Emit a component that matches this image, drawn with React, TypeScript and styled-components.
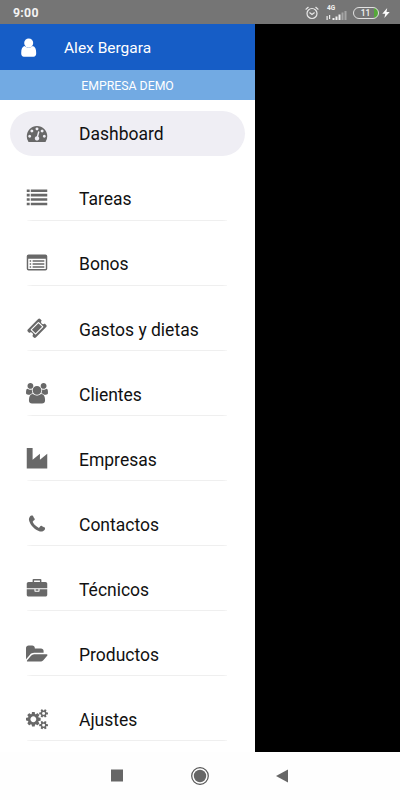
import React from 'react';
import styled, { createGlobalStyle } from 'styled-components';

const GlobalStyle = createGlobalStyle`
  * { box-sizing: border-box; }
  body { margin: 0; background: #000; font-family: Roboto, sans-serif; }
`;

const Screen = styled.div`
  width: 400px;
  height: 800px;
  display: flex;
  flex-direction: column;
  overflow: hidden;
  background: #000;
`;

const StatusBar = styled.header`
  height: 24px;
  flex: none;
  display: flex;
  align-items: center;
  justify-content: space-between;
  padding: 1px 10px 0 13px;
  background: #757575;
  color: #f3f3f3;
`;

const Clock = styled.span`
  font-size: 12.3px;
  font-weight: 700;
  line-height: 16px;
  letter-spacing: 0.3px;
`;

const StatusIcons = styled.div`
  display: flex;
  align-items: center;
`;

const Network = styled.div`
  width: 22px;
  height: 16px;
  margin-left: 7px;
  display: flex;
  flex-direction: column;
`;

const NetworkLabel = styled.span`
  height: 6px;
  padding-left: 1px;
  font-size: 6.5px;
  font-weight: 700;
  line-height: 6px;
`;

const Battery = styled.div`
  width: 26px;
  height: 12px;
  margin: 0 3px 0 5px;
  padding-right: 1px;
  border: 1.5px solid #e2e2e2;
  border-radius: 6px;
  background: linear-gradient(90deg, transparent 84%, #55a83a 84%);
  font-size: 8.5px;
  font-weight: 500;
  line-height: 10px;
  text-align: center;
`;

const Drawer = styled.aside`
  width: 255px;
  height: 727.5px;
  flex: none;
  display: flex;
  flex-direction: column;
  background: #fff;
`;

const Profile = styled.div`
  height: 46px;
  display: flex;
  align-items: center;
  padding: 1px 0 0 20px;
  background: #165dc6;
  color: #fff;
`;

const ProfileName = styled.span`
  margin-left: 26px;
  font-size: 15.5px;
  line-height: 20px;
`;

const Company = styled.div`
  height: 30px;
  background: #72aae3;
  color: #fff;
  font-size: 12.3px;
  line-height: 32px;
  text-align: center;
`;

const Menu = styled.nav`
  display: flex;
  flex-direction: column;
  gap: 20.6px;
  padding: 11px 10.5px 0 10px;
`;

const MenuItem = styled.a<{ $active?: boolean }>`
  height: 44.5px;
  flex: none;
  display: flex;
  align-items: center;
  padding-left: 16px;
  border-radius: 23px;
  background: ${({ $active }) =>
    $active ? '#efeef4' : 'linear-gradient(#efefef, #efefef) 17px 100% / 200px 1px no-repeat'};
  color: #111;
`;

const MenuLabel = styled.span`
  margin-left: 31px;
  padding-top: 2px;
  font-size: 17.5px;
  line-height: 22px;
`;

const IconBox = styled.svg`
  flex: none;
  overflow: visible;
  fill: #686868;
`;

const NavBar = styled.footer`
  flex: 1;
  display: flex;
  align-items: center;
  padding: 0 111px 0 110px;
  justify-content: space-between;
  background: #fefefe;
`;

const smallCog =
  'v140q0 16-149 31-12 27-30 52 51 113 51 138 0 4-4 7-122 71-124 71-8 0-46-47t-52-68q-20 2-30 2t-30-2q-14 21-52 68t-46 47q-2 0-124-71-4-3-4-7 0-25 51-138-18-25-30-52-149-15-149-31v-140q0-16 149-31 13-29 30-52-51-113-51-138 0-4 4-7 4-2 35-20t59-34 30-16q8 0 46 46.5t52 67.5q20-2 30-2t30 2q51-71 92-112l6-2q4 0 124 70 4 3 4 7 0 25-51 138 17 23 30 52 149 15 149 31z';

const icons = {
  dashboard:
    'M384 1152q0-53-37.5-90.5t-90.5-37.5-90.5 37.5-37.5 90.5 37.5 90.5 90.5 37.5 90.5-37.5 37.5-90.5zm192-448q0-53-37.5-90.5t-90.5-37.5-90.5 37.5-37.5 90.5 37.5 90.5 90.5 37.5 90.5-37.5 37.5-90.5zm428 481l101-382q6-26-7.5-48.5t-38.5-29.5-48 6.5-30 39.5l-101 382q-60 5-107 43.5t-63 98.5q-20 77 20 146t117 89 146-20 89-117q16-60-6-117t-72-91zm660-33q0-53-37.5-90.5t-90.5-37.5-90.5 37.5-37.5 90.5 37.5 90.5 90.5 37.5 90.5-37.5 37.5-90.5zm-640-640q0-53-37.5-90.5t-90.5-37.5-90.5 37.5-37.5 90.5 37.5 90.5 90.5 37.5 90.5-37.5 37.5-90.5zm448 192q0-53-37.5-90.5t-90.5-37.5-90.5 37.5-37.5 90.5 37.5 90.5 90.5 37.5 90.5-37.5 37.5-90.5zm320 448q0 261-141 483-19 29-54 29h-1402q-35 0-54-29-141-221-141-483 0-182 71-348t191-286 286-191 348-71 348 71 286 191 191 286 71 348z',
  list:
    'M0 128h256v224h-256zM352 128h1440v224h-1440zM0 512h256v224h-256zM352 512h1440v224h-1440zM0 896h256v224h-256zM352 896h1440v224h-1440zM0 1280h256v224h-256zM352 1280h1440v224h-1440z',
  voucher:
    'M160 128H1632Q1792 128 1792 288V1376Q1792 1536 1632 1536H160Q0 1536 0 1376V288Q0 128 160 128ZM128 512V1376Q128 1408 160 1408H1632Q1664 1408 1664 1376V512ZM256 640h128v128h-128zM512 640h1024v128h-1024zM256 896h128v128h-128zM512 896h1024v128h-1024zM256 1152h128v128h-128zM512 1152h1024v128h-1024z',
  ticket:
    'M1024 452l316 316-572 572-316-316zm-211 979l618-618q19-19 19-45t-19-45l-362-362q-18-18-45-18t-45 18l-618 618q-19 19-19 45t19 45l362 362q18 18 45 18t45-18zm889-637l-907 908q-37 37-90.5 37t-90.5-37l-126-126q56-56 56-136t-56-136-136-56-136 56l-125-126q-37-37-37-90.5t37-90.5l907-906q37-37 90.5-37t90.5 37l125 125q-56 56-56 136t56 136 136 56 136-56l126 125q37 37 37 90.5t-37 90.5z',
  users:
    'M593 896q-162 5-265 128h-134q-82 0-138-40.5t-56-118.5q0-353 124-353 6 0 43.5 21t97.5 42.5 119 21.5q67 0 133-23-5 37-5 66 0 159 81 256zm1071 637q0 120-73 189.5t-194 69.5h-874q-121 0-194-69.5t-73-189.5q0-53 3.5-103.5t14-109 26.5-108.5 43-97.5 62-81 85.5-53.5 111.5-20q10 0 43 21.5t73 48 107 48 135 21.5 135-21.5 107-48 73-48 43-21.5q61 0 111.5 20t85.5 53.5 62 81 43 97.5 26.5 108.5 14 109 3.5 103.5zm-1024-1277q0 106-75 181t-181 75-181-75-75-181 75-181 181-75 181 75 75 181zm704 384q0 159-112.5 271.5t-271.5 112.5-271.5-112.5-112.5-271.5 112.5-271.5 271.5-112.5 271.5 112.5 112.5 271.5zm576 225q0 78-56 118.5t-138 40.5h-134q-103-123-265-128 81-97 81-256 0-29-5-66 66 23 133 23 59 0 119-21.5t97.5-42.5 43.5-21q124 0 124 353zm-128-609q0 106-75 181t-181 75-181-75-75-181 75-181 181-75 181 75 75 181z',
  industry: 'M0 0H512V1024L1152 512V1024L1792 512V1792H0Z',
  phone:
    'M1600 1240q0 27-10 70.5t-21 68.5q-21 50-122 106-94 51-186 51-27 0-53-3.5t-57.5-12.5-47-14.5-55.5-20.5-49-18q-98-35-175-83-127-79-264-216t-216-264q-48-77-83-175-3-9-18-49t-20.5-55.5-14.5-47-12.5-57.5-3.5-53q0-92 51-186 56-101 106-122 25-11 68.5-21t70.5-10q14 0 21 3 18 6 53 76 11 19 30 54t35 63.5 31 53.5q3 4 17.5 25t21.5 35.5 7 28.5q0 20-28.5 50t-62 55-62 53-28.5 46q0 9 5 22.5t8.5 20.5 14 24 11.5 19q76 137 174 235t235 174q2 1 19 11.5t24 14 20.5 8.5 22.5 5q18 0 46-28.5t53-62 55-62 50-28.5q14 0 28.5 7t35.5 21.5 25 17.5q25 15 53.5 31t63.5 35 54 30q70 35 76 53 3 7 3 21z',
  briefcase:
    'M640 256h512v-128h-512v128zm1152 640v480q0 66-47 113t-113 47h-1472q-66 0-113-47t-47-113v-480h672v160q0 26 19 45t45 19h320q26 0 45-19t19-45v-160h672zm-768 0v128h-256v-128h256zm768-480v384h-1792v-384q0-66 47-113t113-47h352v-160q0-40 28-68t68-28h576q40 0 68 28t28 68v160h352q66 0 113 47t47 113z',
  folder:
    'M1879 952q0 31-31 66l-336 396q-43 51-120.5 86.5t-143.5 35.5h-1088q-34 0-60.5-13t-26.5-43q0-31 31-66l336-396q43-51 120.5-86.5t143.5-35.5h1088q34 0 60.5 13t26.5 43zm-343-344v160h-832q-94 0-197 47.5t-164 119.5l-337 396-5 6q0-4-.5-12.5t-.5-12.5v-960q0-92 66-158t158-66h320q92 0 158 66t66 158v32h544q92 0 158 66t66 158z',
  cogs:
    'M896 896q0-106-75-181t-181-75-181 75-75 181 75 181 181 75 181-75 75-181zm768 512q0-52-38-90t-90-38-90 38-38 90q0 53 37.5 90.5t90.5 37.5 90.5-37.5 37.5-90.5zm0-1024q0-52-38-90t-90-38-90 38-38 90q0 53 37.5 90.5t90.5 37.5 90.5-37.5 37.5-90.5zm-384 421v185q0 10-7 19.5t-16 10.5l-155 24q-11 35-32 76 34 48 90 115 7 11 7 20 0 12-7 19-23 30-82.5 89.5t-78.5 59.5q-11 0-21-7l-115-90q-37 19-77 31-11 108-23 155-7 24-30 24h-186q-11 0-20-7.5t-10-17.5l-23-153q-34-10-75-31l-118 89q-7 7-20 7-11 0-21-8-144-133-144-160 0-9 7-19 10-14 41-53t47-61q-23-44-35-82l-152-24q-10-1-17-9.5t-7-19.5v-185q0-10 7-19.5t16-10.5l155-24q11-35 32-76-34-48-90-115-7-11-7-20 0-12 7-20 22-30 82-89t79-59q11 0 21 7l115 90q34-18 77-32 11-108 23-154 7-24 30-24h186q11 0 20 7.5t10 17.5l23 153q34 10 75 31l118-89q8-7 20-7 11 0 21 8 144 133 144 160 0 8-7 19-12 16-42 54t-45 60q23 48 34 82l152 23q10 2 17 10.5t7 19.5z' +
    'M1920 1338' + smallCog + 'M1920 314' + smallCog,
};

type IconName = keyof typeof icons;

const wideIcons: IconName[] = ['users', 'folder', 'cogs'];

const entries: { icon: IconName; label: string }[] = [
  { icon: 'dashboard', label: 'Dashboard' },
  { icon: 'list', label: 'Tareas' },
  { icon: 'voucher', label: 'Bonos' },
  { icon: 'ticket', label: 'Gastos y dietas' },
  { icon: 'users', label: 'Clientes' },
  { icon: 'industry', label: 'Empresas' },
  { icon: 'phone', label: 'Contactos' },
  { icon: 'briefcase', label: 'Técnicos' },
  { icon: 'folder', label: 'Productos' },
  { icon: 'cogs', label: 'Ajustes' },
];

function MenuIcon({ name }: { name: IconName }) {
  const left = wideIcons.includes(name) ? 0 : -64;
  return (
    <IconBox width="22" height="20.5" viewBox={`${left} 0 1920 1792`}>
      <path fillRule="evenodd" d={icons[name]} />
    </IconBox>
  );
}

export default function App() {
  return (
    <>
      <GlobalStyle />
      <Screen>
        <StatusBar>
          <Clock>9:00</Clock>
          <StatusIcons>
            <svg width="14" height="14" viewBox="0 0 14 14" fill="none" stroke="#e8e8e8" strokeWidth="1.2" strokeLinecap="round">
              <circle cx="7" cy="7.5" r="5" />
              <path d="M1 3.2 3.2 1.3M13 3.2 10.8 1.3M4.8 6.8 7 8.5 9.3 6.8" />
            </svg>
            <Network>
              <NetworkLabel>4G</NetworkLabel>
              <svg width="22" height="10" viewBox="0 0 22 10" fill="#f0f0f0">
                <path d="M.5 5h1.2v4H.5zM3 4h1.2v4H3zM6.5 7h2v2h-2zM9.5 5.5h2v3.500h-2zM12.500 3.500h2v5.500h-2z" />
                <path d="M15.500 1.500h2v7.500h-2zM18.500 0h2v9h-2z" fill="#a5a5a5" />
              </svg>
            </Network>
            <Battery>11</Battery>
            <svg width="8" height="12" viewBox="0 0 8 12" fill="#fff">
              <path d="M5.200 1 .3 6.700H3.300L2.300 11 7.700 5H4.500Z" />
            </svg>
          </StatusIcons>
        </StatusBar>
        <Drawer>
          <Profile>
            <svg width="18" height="20" viewBox="0 0 18 20" fill="#fff">
              <path d="M4.700 8.100C2.200 8.500 1.200 11 1.200 15.300 1.200 17.300 2.200 18.700 3.900 18.700H13.500C15.200 18.700 16.200 17.300 16.200 15.300 16.200 11 15.200 8.500 12.700 8.100 10.500 10.100 6.900 10.100 4.700 8.100Z" />
              <circle cx="8.700" cy="5" r="4.500" />
            </svg>
            <ProfileName>Alex Bergara</ProfileName>
          </Profile>
          <Company>EMPRESA DEMO</Company>
          <Menu>
            {entries.map(({ icon, label }, index) => (
              <MenuItem key={label} $active={index === 0}>
                <MenuIcon name={icon} />
                <MenuLabel>{label}</MenuLabel>
              </MenuItem>
            ))}
          </Menu>
        </Drawer>
        <NavBar>
          <svg width="13" height="13" viewBox="0 0 13 13" fill="#666">
            <path d="M1 .5h12v12H1z" />
          </svg>
          <svg width="20" height="20" viewBox="0 0 20 20">
            <circle cx="10" cy="10" r="8.300" fill="none" stroke="#555" strokeWidth="1.200" />
            <circle cx="10" cy="10" r="6.200" fill="#666" />
          </svg>
          <svg width="13" height="14" viewBox="0 0 13 14" fill="#666">
            <path d="M0 7 12 .5v13z" />
          </svg>
        </NavBar>
      </Screen>
    </>
  );
}
